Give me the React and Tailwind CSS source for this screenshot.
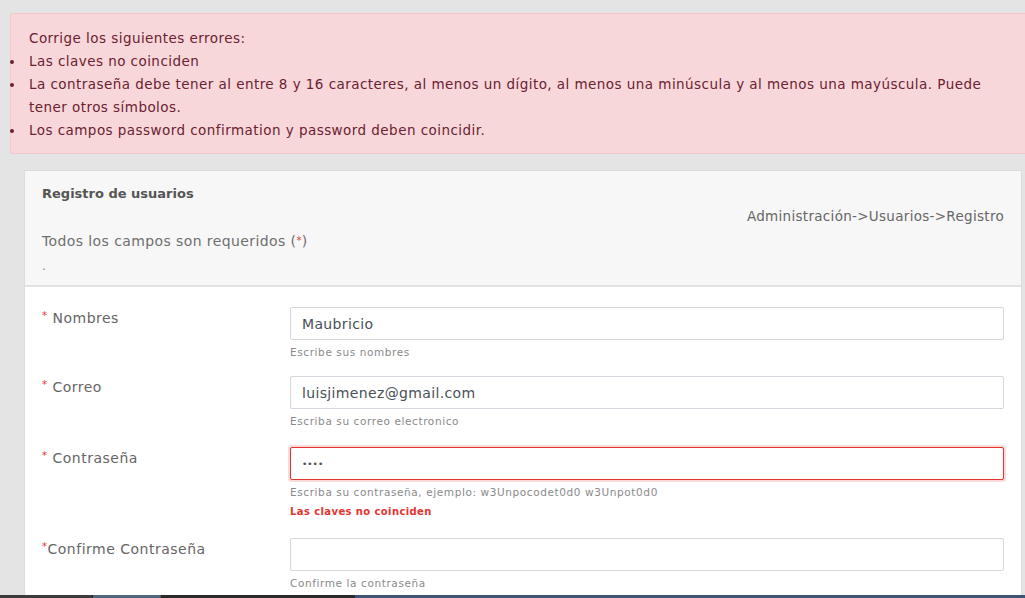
const font = { fontFamily: '"DejaVu Sans", "Open Sans", sans-serif' }

function Bullet({ children }) {
  return (
    <li className="flex">
      <span className="w-[18px] shrink-0 flex pt-[10px]">
        <span className="w-[4px] h-[4px] rounded-full bg-[#6a2230] -ml-[1px]" />
      </span>
      <span className="flex-1">{children}</span>
    </li>
  )
}

function Field({ label, value, help, error, invalid, password, tight, gap = 'mb-[17px]' }) {
  const base = password
    ? 'w-full h-[33px] px-[11px] text-[9px] text-[#495057] bg-white rounded-[2px] outline-none'
    : 'w-full h-[33px] px-[11px] text-[14px] tracking-[0.35px] text-[#495057] bg-white rounded-[2px] outline-none'
  return (
    <div className={'flex ' + gap}>
      <label className="w-[248px] shrink-0 pt-[1px] text-[14px] tracking-[0.5px] text-[#666]">
        <span className="text-[#e3342f] text-[10px] align-top">*</span>
        {tight ? '' : ' '}
        {label}
      </label>
      <div className="flex-1">
        <input
          type="text"
          defaultValue={value}
          readOnly
          className={
            base +
            (invalid
              ? ' border border-[#e3342f] shadow-[0_0_0_2px_rgba(227,52,47,0.18)]'
              : ' border border-[#d3d8de]')
          }
          style={font}
        />
        <div className="mt-[5px] text-[10.5px] tracking-[0.6px] leading-[14px] text-[#8a8a8a]">{help}</div>
        {error && (
          <div className="mt-[6px] text-[10px] tracking-[0.4px] leading-[14px] font-bold text-[#e3342f]">{error}</div>
        )}
      </div>
    </div>
  )
}

export default function App() {
  return (
    <div className="w-[1025px] h-[598px] overflow-hidden bg-[#e4e4e4] relative flex flex-col" style={font}>
      <div className="pt-[13px]">
        {/* Error alert */}
        <div className="ml-[10px] bg-[#f8d7da] border border-r-0 border-[#f5c6cb] rounded-l-[3px] pt-[13px] pb-[11px] text-[13.5px] tracking-[0.45px] leading-[23px] text-[#6a2230]">
          <div className="pl-[18px]">Corrige los siguientes errores:</div>
          <ul>
            <Bullet>Las claves no coinciden</Bullet>
            <Bullet>
              La contraseña debe tener al entre 8 y 16 caracteres, al menos un dígito, al menos una minúscula y al menos una mayúscula. Puede
              <br />
              tener otros símbolos.
            </Bullet>
            <Bullet>Los campos password confirmation y password deben coincidir.</Bullet>
          </ul>
        </div>
      </div>

      {/* Card */}
      <div className="mt-[16px] ml-[24px] mr-[3px] flex-1 bg-white border border-[#dcdcdc] border-b-0">
        <div className="bg-[#f7f7f7] border-b-2 border-[#e2e2e2] flex justify-between px-[17px] pt-[13px] pb-[9px]">
          <div>
            <div className="text-[13px] leading-[20px] font-bold text-[#555]">Registro de usuarios</div>
            <div className="mt-[27px] text-[14px] tracking-[0.4px] leading-[20px] text-[#6f6f6f]">
              Todos los campos son requeridos (<span className="text-[#e3342f] text-[10px] align-top">*</span>)
            </div>
            <div className="mt-[5px] text-[12px] leading-[20px] text-[#888]">.</div>
          </div>
          <div className="mt-[22px] text-[13.5px] tracking-[0.3px] leading-[20px] text-[#666]">Administración-&gt;Usuarios-&gt;Registro</div>
        </div>

        <div className="pt-[20px] px-[17px]">
          <Field label="Nombres" value="Maubricio" help="Escribe sus nombres" />
          <Field label="Correo" value="luisjimenez@gmail.com" help="Escriba su correo electronico" gap="mb-[19px]" />
          <Field
            label="Contraseña"
            value="••••"
            password
            help="Escriba su contraseña, ejemplo: w3Unpocodet0d0 w3Unpot0d0"
            error="Las claves no coinciden"
            invalid
            gap="mb-[19px]"
          />
          <Field label="Confirme Contraseña" value="" help="Confirme la contraseña" tight />
        </div>
      </div>

      {/* Taskbar edge */}
      <div className="absolute left-0 right-0 bottom-0 h-[3px] flex bg-[#2f3a46]">
        <div className="w-[92px] bg-[#3b3b3b]" />
        <div className="w-[68px] bg-[#4f6680] border-l border-[#222]" />
        <div className="w-[195px] bg-[#2a2a2a] border-l border-[#555]" />
        <div className="flex-1 bg-[#3d5572]" />
      </div>
    </div>
  )
}
